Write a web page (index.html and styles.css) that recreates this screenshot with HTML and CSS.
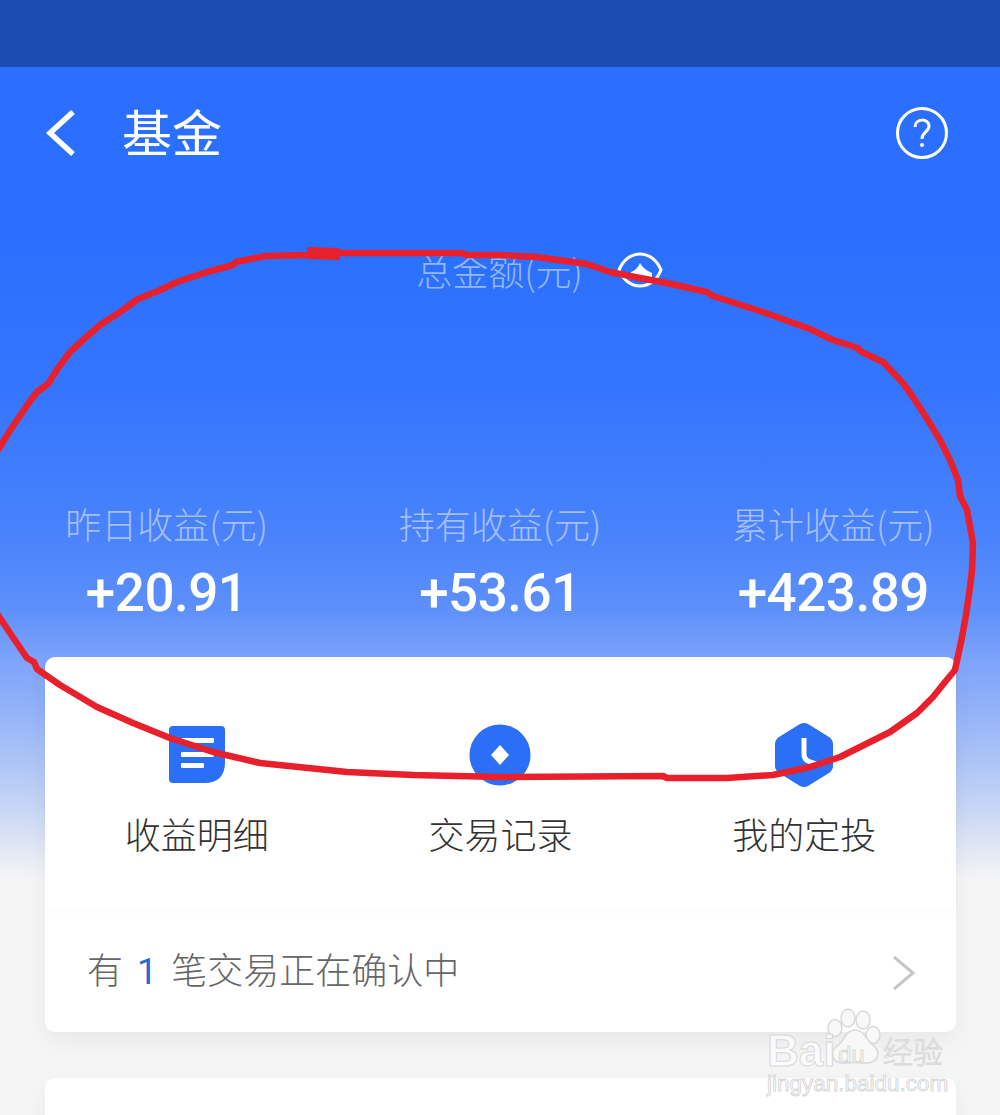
FILE: index.html
```html
<!DOCTYPE html>
<html lang="zh">
<head>
    <meta charset="UTF-8">
    <meta name="viewport" content="width=device-width, initial-scale=1.0">
    <title>基金</title>
    <link rel="stylesheet" href="styles.css">
</head>
<body>
    <div class="status-bar"></div>
    <header class="nav">
        <svg class="back" width="32" height="46" viewBox="0 0 32 46"><path d="M28 2 L5 23 L28 44" fill="none" stroke="#fff" stroke-width="5.5"/></svg>
        <h1>基金</h1>
        <svg class="help" width="54" height="54" viewBox="0 0 54 54">
            <circle cx="27" cy="27" r="24.5" fill="none" stroke="#fff" stroke-width="3"/>
            <path d="M20 21 C20 12 34 12 34 20 C34 26 27 26 27 33" fill="none" stroke="#fff" stroke-width="3"/>
            <circle cx="27" cy="39" r="2" fill="#fff"/>
        </svg>
    </header>

    <div class="total">
        <span>总金额(元)</span>
        <svg width="46" height="36" viewBox="0 0 46 36">
            <path d="M2 18 C6 8 14 2 23 2 C32 2 40 8 44 18 C40 28 32 34 23 34 C14 34 6 28 2 18 Z" fill="none" stroke="#fff" stroke-width="3"/>
            <path d="M14 20 Q20 18 23 11 Q26 17 35 21 L35 26 L14 26 Z" fill="#fff"/>
        </svg>
    </div>

    <div class="stats">
        <div class="stat"><div class="stat-label">昨日收益(元)</div><div class="stat-value">+20.91</div></div>
        <div class="stat"><div class="stat-label">持有收益(元)</div><div class="stat-value">+53.61</div></div>
        <div class="stat"><div class="stat-label">累计收益(元)</div><div class="stat-value">+423.89</div></div>
    </div>

    <section class="card">
        <div class="actions">
            <div class="action">
                <svg width="56" height="64" viewBox="0 -3 56 64">
                    <path d="M4 0 H52 Q56 0 56 4 V36 Q56 57 35 57 H4 Q0 57 0 53 V4 Q0 0 4 0 Z" fill="#2a6ff5"/>
                    <rect x="12" y="12" width="33" height="5" rx="1" fill="#fff"/>
                    <rect x="12" y="26" width="33" height="5" rx="1" fill="#fff"/>
                    <rect x="12" y="37" width="23" height="5" rx="1" fill="#fff"/>
                </svg>
                <span>收益明细</span>
            </div>
            <div class="action">
                <svg width="62" height="64" viewBox="0 -1 62 64">
                    <circle cx="31" cy="31" r="30.5" fill="#2a6ff5"/>
                    <path d="M31 21 L40 31 L31 41 L22 31 Z" fill="#fff"/>
                </svg>
                <span>交易记录</span>
            </div>
            <div class="action">
                <svg width="58" height="64" viewBox="0 0 58 64">
                    <path d="M25 1 Q29 -1 33 1 L54 14 Q58 17 58 21 V43 Q58 47 54 50 L33 63 Q29 65 25 63 L4 50 Q0 47 0 43 V21 Q0 17 4 14 Z" fill="#2a6ff5"/>
                    <path d="M29 15 V31 Q29 36 33 38 L44 42" fill="none" stroke="#fff" stroke-width="5"/>
                </svg>
                <span>我的定投</span>
            </div>
        </div>
        <div class="notice">
            <span class="notice-text">有<b>1</b>笔交易正在确认中</span>
            <svg class="notice-arrow" width="24" height="36" viewBox="0 0 24 36"><path d="M2 2 L21 18 L2 34" fill="none" stroke="#c6c6c6" stroke-width="3"/></svg>
        </div>
    </section>

    <section class="card next-card"></section>

    <!-- hand drawn circle on top of the screenshot -->
    <svg class="scribble" width="1000" height="1115" viewBox="0 0 1000 1115">
        <g fill="none" stroke="#e8202c" stroke-linejoin="round" stroke-linecap="round">
            <path stroke-width="6.5" d="M-2 450 L9 432 L17 420 L28 404 L37 392 L48 384 L58 368 L70 352 L84 339 L100 325 L120 312 L138 299 L158 291 L177 282 L207 272 L233 265 L236 262 L265 256 L307 255 L340 253 L462 253 L466 255 L500 255 L537 257 L587 264 L610 272 L640 278 L667 283 L707 292 L713 296 L763 312 L810 329 L833 340 L858 348 L860 351 L883 362 L903 383 L913 397 L926 417 L940 440 L950 460 L958 480 L960 496 L967 510 L973 543 L972 570 L970 587 L966 615 L962 637 L955 670 L945 682 L933 697 L917 713 L890 732 L840 757 L810 767 L773 775 L727 778 L667 778 L663 776 L500 777 L413 775 L347 772 L260 763 L213 752 L170 738 L133 723 L97 707 L60 685 L37 669 L34 662 L27 658 L10 633 L-2 615"/>
            <path stroke-width="12" stroke-linecap="butt" d="M307 253 L340 254"/>
        </g>
    </svg>

    <div class="watermark">
        <svg class="paw" width="60" height="60" viewBox="0 0 60 60">
            <g fill="#f8f8f8" stroke="#d8d8d8" stroke-width="1.5">
                <ellipse cx="10" cy="20" rx="7" ry="8.5"/>
                <ellipse cx="23" cy="10" rx="7" ry="9"/>
                <ellipse cx="38" cy="12" rx="7" ry="9"/>
                <ellipse cx="48" cy="27" rx="7" ry="8.5"/>
                <path d="M30 22 C40 22 41 33 49 38 C56 44 53 55 42 55 C35 54 25 54 18 55 C7 55 4 44 12 38 C20 33 20 22 30 22 Z"/>
            </g>
        </svg>
        <span class="wm-bai">Bai</span>
        <span class="wm-du">du</span>
        <span class="wm-cn">经验</span>
        <span class="wm-url">jingyan.baidu.com</span>
    </div>
</body>
</html>
```

FILE: styles.css
```css
* {
    box-sizing: border-box;
}
html, body {
    height: 1115px;
    overflow: hidden;
}
body {
    position: relative;
    margin: 0;
    background: linear-gradient(180deg, #2a6fff 0, #2a6fff 240px, #3676fe 400px, #4a83fb 540px, #5e90fb 610px, #7ca2fa 657px, #93b2f8 710px, #bccff5 790px, #f5f5f5 880px);
    font-family: "Noto Sans CJK SC", "Liberation Sans", sans-serif;
    font-weight: 300;
}
.status-bar {
    height: 67px;
    background-color: #1b4db1;
}
.nav {
    display: flex;
    align-items: center;
    height: 132px;
    padding: 0 51px 0 45px;
    color: #fff;
}
.nav h1 {
    flex: 1;
    margin: 0 0 6px 45px;
    font-size: 50px;
    font-weight: 400;
}
.total {
    display: flex;
    justify-content: center;
    align-items: center;
    gap: 34px;
    height: 50px;
    margin-top: 46px;
    padding-left: 79px;
    font-size: 36px;
    color: rgba(255, 255, 255, 0.5);
}
.stats {
    display: grid;
    grid-template-columns: repeat(3, 1fr);
    margin-top: 203px;
    text-align: center;
}
.stat-label {
    height: 50px;
    line-height: 50px;
    font-size: 36px;
    color: rgba(255, 255, 255, 0.5);
}
.stat-value {
    height: 109px;
    padding-top: 10px;
    line-height: 70px;
    font-family: Roboto, "Liberation Sans", sans-serif;
    font-size: 53px;
    font-weight: 500;
    letter-spacing: -0.5px;
    color: #fff;
}
.card {
    margin: 0 44px 0 45px;
    background-color: #fff;
    border-radius: 10px;
    box-shadow: 0 10px 24px rgba(0, 0, 0, 0.05);
}
.actions {
    display: grid;
    grid-template-columns: repeat(3, 1fr);
    height: 253px;
    padding-top: 66px;
    box-shadow: 0 2px 4px rgba(0, 0, 0, 0.02);
}
.action {
    display: flex;
    flex-direction: column;
    align-items: center;
    font-size: 36px;
    color: #333;
}
.action svg {
    display: block;
}
.action span {
    margin-top: 21px;
    line-height: 50px;
}
.notice {
    display: flex;
    justify-content: space-between;
    align-items: center;
    height: 122px;
    padding: 0 40px 0 42px;
    font-size: 36px;
    color: #666;
}
.notice-text {
    margin-bottom: 6px;
}
.notice-arrow {
    margin-top: 4px;
}
.notice b {
    margin: 0 14px;
    font-family: Roboto, sans-serif;
    font-weight: 400;
    color: #2a6ac8;
}
.next-card {
    height: 80px;
    margin-top: 46px;
}
.scribble {
    position: absolute;
    top: 0;
    left: 0;
}
.watermark {
    position: absolute;
    top: 1005px;
    left: 765px;
    width: 190px;
    height: 95px;
    color: rgba(255, 255, 255, 0.7);
    -webkit-text-stroke: 1px #d8d8d8;
}
.watermark span {
    position: absolute;
    line-height: 1;
}
.paw {
    position: absolute;
    top: 3px;
    left: 60px;
}
.wm-bai {
    top: 24px;
    left: 2px;
    font-family: "Liberation Sans", sans-serif;
    font-size: 44px;
    font-weight: 700;
}
.wm-du {
    top: 38px;
    left: 73px;
    font-family: "Liberation Sans", sans-serif;
    font-size: 24px;
}
.wm-cn {
    top: 30px;
    left: 118px;
    font-size: 30px;
}
.wm-url {
    top: 68px;
    left: 2px;
    font-family: "Liberation Sans", sans-serif;
    font-size: 22.5px;
    white-space: nowrap;
}
```
